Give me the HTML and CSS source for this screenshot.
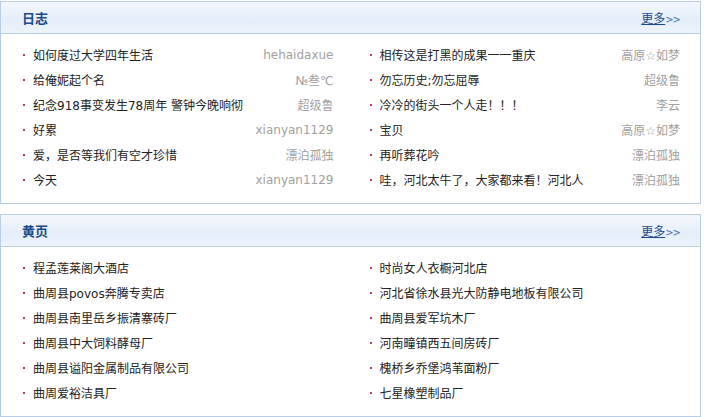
FILE: index.html
```html
<!DOCTYPE html>
<html lang="zh-CN">
<head>
  <meta charset="UTF-8">
  <title>日志 黄页</title>
  <link rel="stylesheet" href="styles.css">
</head>
<body>
  <div class="box">
    <div class="box-head">
      <h2>日志</h2>
      <a href="#" class="more"><u>更多</u><span class="arrows">&gt;&gt;</span></a>
    </div>
    <div class="box-body">
      <ul class="list">
        <li><a href="#">如何度过大学四年生活</a><span class="author">hehaidaxue</span></li>
        <li><a href="#">给俺妮起个名</a><span class="author">№叁℃</span></li>
        <li><a href="#">纪念918事变发生78周年 警钟今晚响彻</a><span class="author">超级鲁</span></li>
        <li><a href="#">好累</a><span class="author">xianyan1129</span></li>
        <li><a href="#">爱，是否等我们有空才珍惜</a><span class="author">漂泊孤独</span></li>
        <li><a href="#">今天</a><span class="author">xianyan1129</span></li>
      </ul>
      <ul class="list">
        <li><a href="#">相传这是打黑的成果一一重庆</a><span class="author">高原☆如梦</span></li>
        <li><a href="#">勿忘历史;勿忘屈辱</a><span class="author">超级鲁</span></li>
        <li><a href="#">冷冷的街头一个人走！！！</a><span class="author">李云</span></li>
        <li><a href="#">宝贝</a><span class="author">高原☆如梦</span></li>
        <li><a href="#">再听葬花吟</a><span class="author">漂泊孤独</span></li>
        <li><a href="#">哇，河北太牛了，大家都来看！河北人</a><span class="author">漂泊孤独</span></li>
      </ul>
    </div>
  </div>

  <div class="box">
    <div class="box-head">
      <h2>黄页</h2>
      <a href="#" class="more"><u>更多</u><span class="arrows">&gt;&gt;</span></a>
    </div>
    <div class="box-body">
      <ul class="list">
        <li><a href="#">程孟莲莱阁大酒店</a></li>
        <li><a href="#">曲周县povos奔腾专卖店</a></li>
        <li><a href="#">曲周县南里岳乡振清寨砖厂</a></li>
        <li><a href="#">曲周县中大饲料酵母厂</a></li>
        <li><a href="#">曲周县谥阳金属制品有限公司</a></li>
        <li><a href="#">曲周爱裕洁具厂</a></li>
      </ul>
      <ul class="list">
        <li><a href="#">时尚女人衣橱河北店</a></li>
        <li><a href="#">河北省徐水县光大防静电地板有限公司</a></li>
        <li><a href="#">曲周县爱军坑木厂</a></li>
        <li><a href="#">河南疃镇西五间房砖厂</a></li>
        <li><a href="#">槐桥乡乔堡鸿苇面粉厂</a></li>
        <li><a href="#">七星橡塑制品厂</a></li>
      </ul>
    </div>
  </div>
</body>
</html>
```

FILE: styles.css
```css
body {
  margin: 0;
  padding-top: 1px;
  background: #fff;
  font-family: "DejaVu Sans", "Noto Sans CJK SC", sans-serif;
  font-size: 12px;
  color: #333;
}

.box {
  width: 699px;
  border: 1px solid #b7cee6;
  margin-bottom: 10px;
}

.box-head {
  height: 31px;
  display: flex;
  align-items: center;
  justify-content: space-between;
  padding: 0 20px 0 21px;
  background: linear-gradient(#f3f7fc, #e4eef8 60%, #edf3fa);
  border-bottom: 1px solid #b7cee6;
}

.box-head h2 {
  margin: 0;
  font-family: "Noto Sans CJK SC", sans-serif;
  font-size: 13px;
  font-weight: bold;
  color: #1b4a8a;
}

.more {
  font-family: "Noto Sans CJK SC", sans-serif;
  font-size: 12px;
  color: #1b4a8a;
  text-decoration: none;
}

.more .arrows {
  font-family: "DejaVu Sans", sans-serif;
  font-size: 10px;
  color: #4a74a8;
  letter-spacing: -1px;
}

.box-body {
  display: grid;
  grid-template-columns: 1fr 1fr;
  column-gap: 35px;
  padding: 8px 20px 11px 21px;
}

.list {
  list-style: none;
  margin: 0;
  padding: 0;
}

.list li {
  height: 25px;
  display: flex;
  align-items: center;
  justify-content: space-between;
  padding-left: 11px;
  position: relative;
}

.list li::before {
  content: "";
  position: absolute;
  left: 1px;
  top: 12px;
  width: 2px;
  height: 2px;
  background: #c8346a;
}

.list a {
  color: #222;
  text-decoration: none;
  white-space: nowrap;
}

.author {
  color: #a0a0a0;
  white-space: nowrap;
}
```
